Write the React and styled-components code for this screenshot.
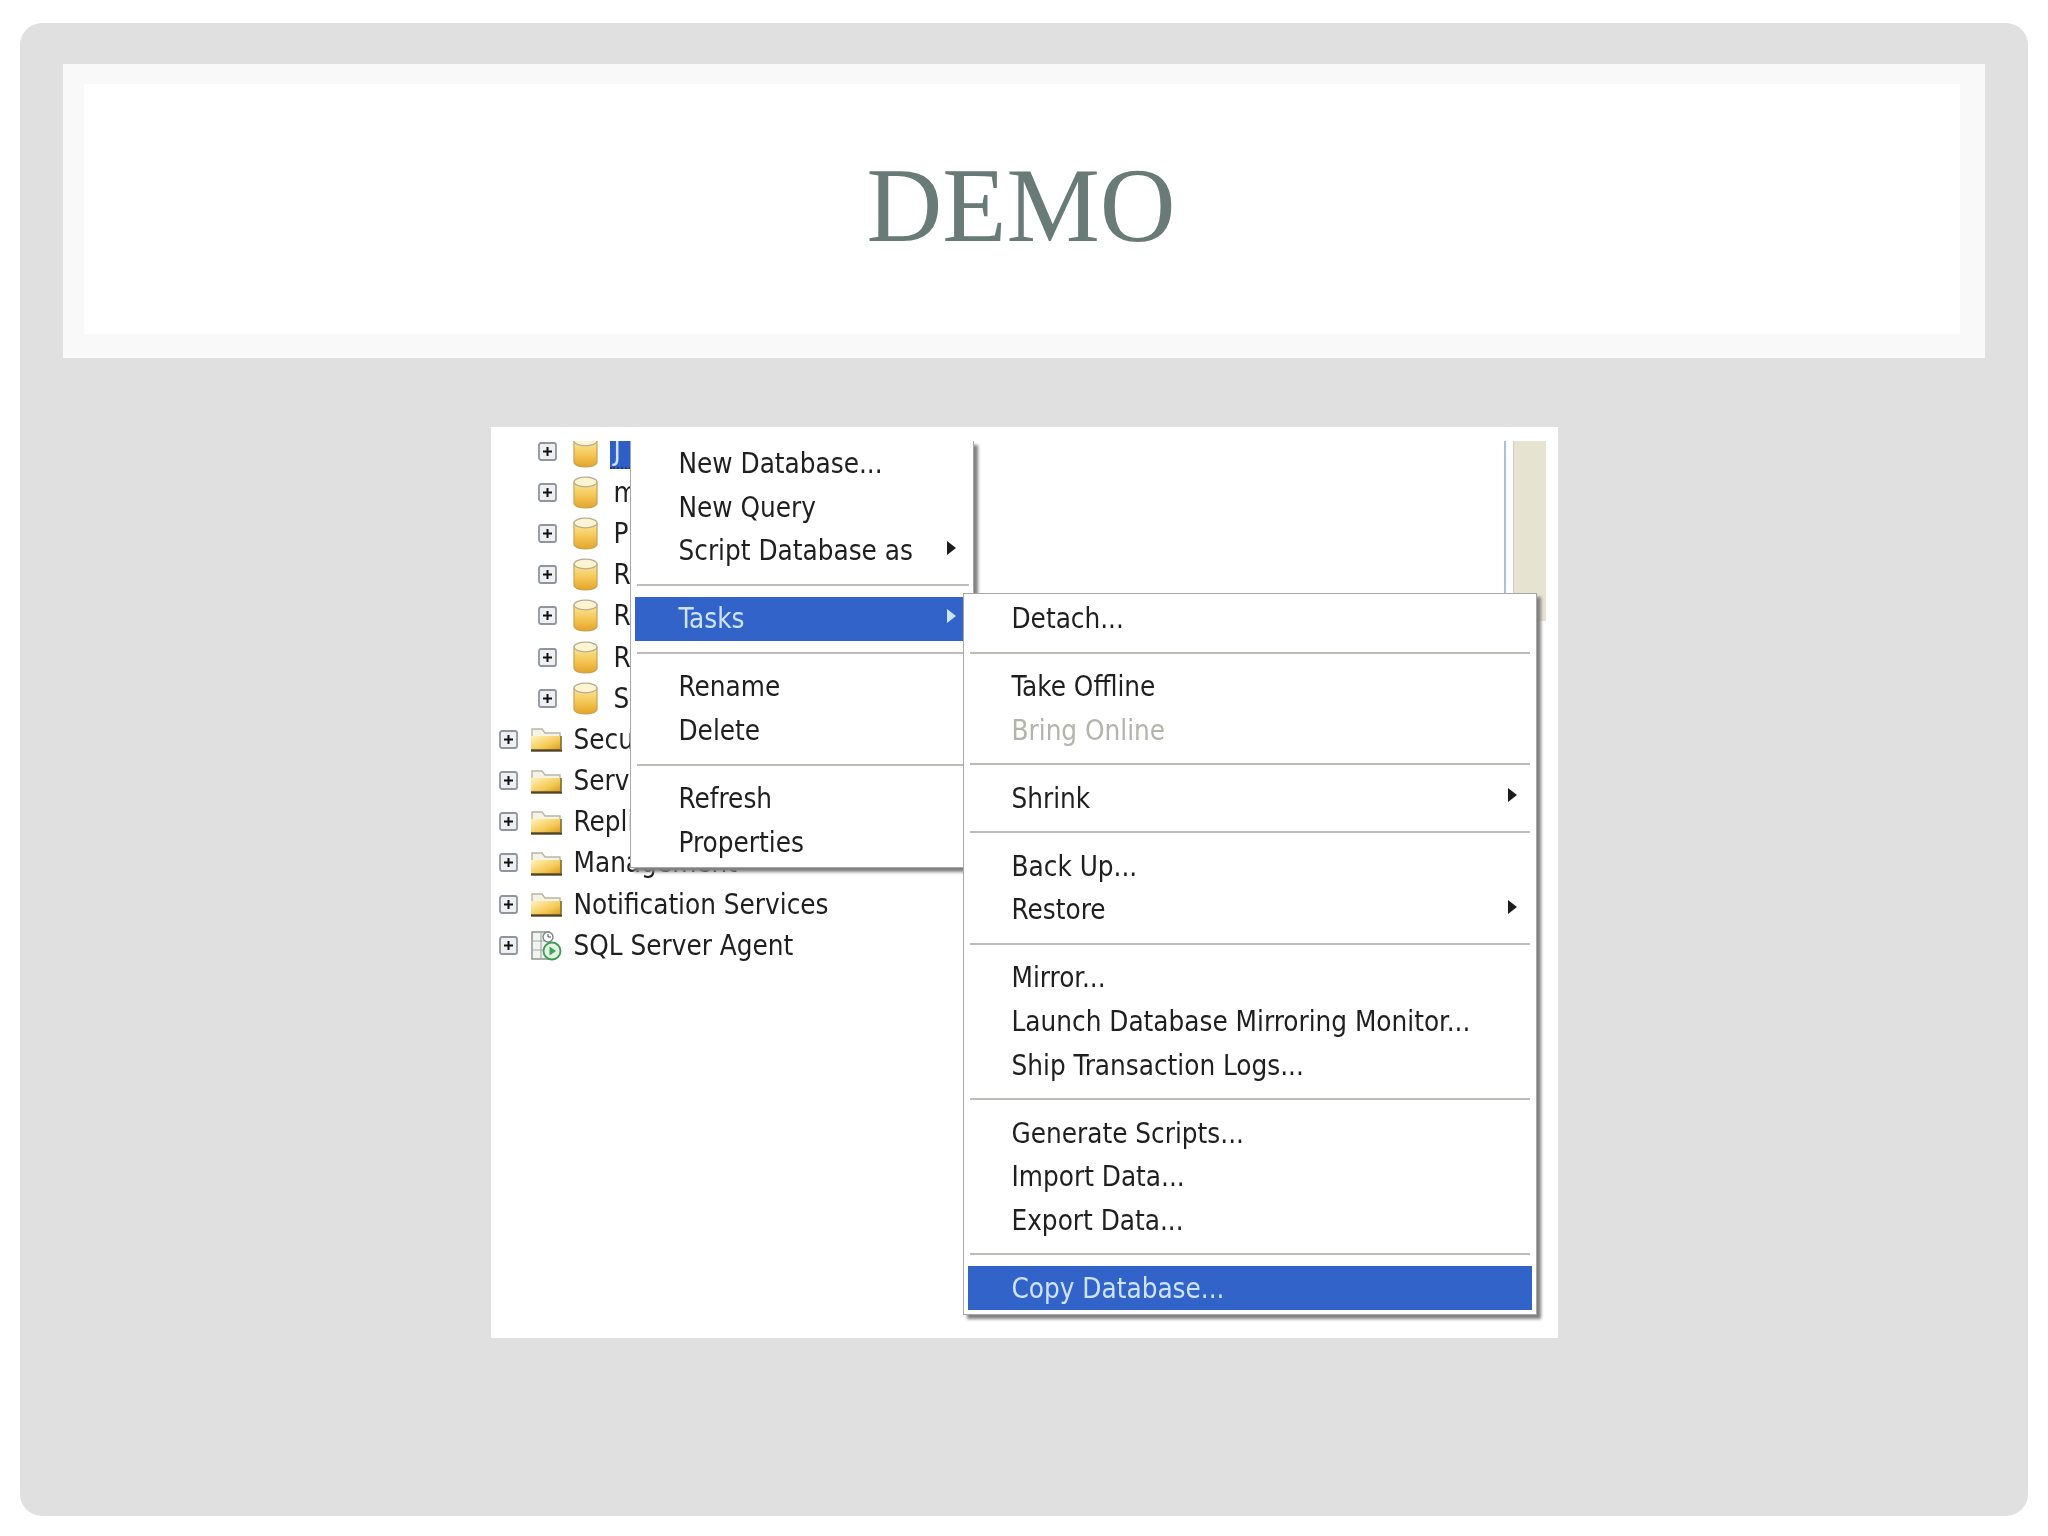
import React from 'react';
import styled, {createGlobalStyle} from 'styled-components';

const GlobalStyle = createGlobalStyle`
  html, body {
    margin: 0;
    padding: 0;
    background: #fff;
  }
`;

const Slide = styled.div`
  box-sizing: border-box;
  width: 2008px;
  height: 1493px;
  margin: 23px 20px 20px;
  padding: 41px 43px 0;
  display: flex;
  flex-direction: column;
  background: #e0e0e1;
  border-radius: 22px;
`;

const TitleBand = styled.div`
  box-sizing: border-box;
  height: 294px;
  padding: 20px 25px 24px 21px;
  background: #f9f9f9;
`;

const TitleBox = styled.div`
  height: 100%;
  display: flex;
  justify-content: center;
  align-items: center;
  background: #fff;
`;

const Title = styled.h1`
  margin: -8px 2px 0 0;
  font-family: "Liberation Serif", serif;
  font-size: 105px;
  font-weight: 400;
  line-height: 1;
  color: #687b77;
`;

const Shot = styled.div`
  position: relative;
  align-self: center;
  width: 1067px;
  height: 911px;
  margin-top: 69px;
  display: flex;
  align-items: flex-start;
  background: #fff;
  font-family: "DejaVu Sans", "Liberation Sans", sans-serif;
  font-stretch: condensed;
  font-size: 27.6px;
  color: #1f1f1f;
  overflow: hidden;
  filter: blur(0.75px);
`;

const Tree = styled.div`
  flex: 1;
  height: 560px;
  margin-top: 14px;
  overflow: hidden;
`;

const TreeList = styled.ul`
  list-style: none;
  margin: -10.5px 0 0;
  padding: 0;
`;

const TreeRow = styled.li`
  height: 41.2px;
  display: flex;
  align-items: center;
  padding-left: ${p => p.$level === 0 ? 47 : 8}px;
  white-space: nowrap;
`;

const Slot = styled.span`
  width: ${p => p.$wide ? 56 : 57}px;
  display: flex;
  justify-content: center;
`;

const TreeLabel = styled.span`
  margin-left: ${p => p.$selected ? -4 : 0}px;
  padding: ${p => p.$selected ? '0 10px 0 4px' : 0};
  ${p => p.$selected && `
    background: #2f5fc6;
    color: #cfe2ff;
    border-bottom: 2px dotted #23387a;
  `}
`;

const Edge = styled.div`
  width: 33px;
  height: 180px;
  margin: 14px 12px 0 0;
  padding-left: 7px;
  border-left: 2px solid #a9c0dc;
  &::after {
    content: "";
    display: block;
    height: 100%;
    background: #e6e3d0;
    border-left: 1px solid #cfcfcf;
  }
`;

const Menu = styled.div`
  position: absolute;
  box-sizing: border-box;
  background: #fff;
  box-shadow: 4px 4px 3px #808080;
  border: 1px solid #a8a8a8;
`;

const MainMenu = styled(Menu)`
  left: 139px;
  top: 14px;
  width: 344px;
  height: 427px;
  padding: 1px 2px 4px 4px;
  border-top: none;
`;

const SubMenu = styled(Menu)`
  left: 472px;
  top: 166px;
  width: 574px;
  height: 722px;
  padding: 3px 4px 4px;
`;

const Item = styled.div`
  box-sizing: border-box;
  height: 43.6px;
  display: flex;
  align-items: center;
  padding: 0 15px 0 44px;
  white-space: nowrap;
  ${p => p.$active && `
    background: #3163c8;
    color: #cde3ff;
  `}
  ${p => p.$muted && 'color: #b4b4ac;'}
`;

const Arrow = styled.span`
  width: 0;
  height: 0;
  margin: -6px 0 0 auto;
  border-style: solid;
  border-width: 7px 0 7px 9px;
  border-color: transparent transparent transparent ${p => p.$active ? '#cde3ff' : '#1c1c1c'};
`;

const Sep = styled.div`
  height: 24.4px;
  display: flex;
  align-items: center;
  padding: 0 2px;
  &::after {
    content: "";
    flex: 1;
    height: 2px;
    background: #bdbdb8;
  }
`;

const Gradients = () => (
    <svg width="0" height="0" style={{position: 'absolute'}}>
        <defs>
            <linearGradient id="dbBody" x1="0" y1="0" x2="0" y2="1">
                <stop offset="0" stopColor="#fbe79c"/>
                <stop offset="0.55" stopColor="#f4c552"/>
                <stop offset="1" stopColor="#e3a42a"/>
            </linearGradient>
            <linearGradient id="folderBody" x1="0" y1="0" x2="1" y2="1">
                <stop offset="0" stopColor="#fff3bf"/>
                <stop offset="0.6" stopColor="#f5c955"/>
                <stop offset="1" stopColor="#d8981e"/>
            </linearGradient>
        </defs>
    </svg>
);

const PlusBox = () => (
    <svg width="19" height="19" viewBox="0 0 19 19">
        <rect x="1" y="1" width="17" height="17" rx="2" fill="#eef0f4" stroke="#8f959e" strokeWidth="1.800"/>
        <path d="M5 9.500h9M9.500 5v9" stroke="#111" strokeWidth="2"/>
    </svg>
);

const DbIcon = () => (
    <svg width="25" height="33" viewBox="0 0 25 33">
        <path d="M1 6v21c0 3 5 5 11.500 5s11.500-2 11.500-5V6z" fill="url(#dbBody)" stroke="#c9a354" strokeWidth="1.200"/>
        <ellipse cx="12.500" cy="6" rx="11.500" ry="4.800" fill="#fdf4d2" stroke="#b9ad90" strokeWidth="1.200"/>
    </svg>
);

const FolderIcon = () => (
    <svg width="32" height="26" viewBox="0 0 32 26">
        <path d="M2 24V3h10l3 4h15v17z" fill="#f7f3e4" stroke="#b9b5a6" strokeWidth="1.400"/>
        <path d="M1 24V10h30v14z" fill="url(#folderBody)"/>
        <path d="M1 24.500h31" stroke="#4f4426" strokeWidth="2.400"/>
        <path d="M31 10v14" stroke="#7c6a30" strokeWidth="1.600"/>
    </svg>
);

const AgentIcon = () => (
    <svg width="32" height="31" viewBox="0 0 32 31">
        <path d="M2 2h17v27H2z" fill="#f2f4f2" stroke="#8c958e" strokeWidth="1.500"/>
        <path d="M2 11h17M2 20h17M11 2v27" stroke="#a4aca6" strokeWidth="1.200"/>
        <circle cx="18" cy="7" r="5" fill="#fff" stroke="#7d8580" strokeWidth="1.400"/>
        <path d="M18 4v3h3" stroke="#4c4c4c" strokeWidth="1" fill="none"/>
        <circle cx="22" cy="21" r="8.500" fill="#e3f4e0" stroke="#3f9a57" strokeWidth="1.800"/>
        <path d="M19.500 16.500l6.500 4.500-6.500 4.500z" fill="#3ea35a"/>
    </svg>
);

const databases = ['J', 'm', 'P', 'R', 'R', 'R', 'S'];
const folders = ['Security', 'Server Objects', 'Replication', 'Management', 'Notification Services'];

const mainMenu = [
    ['New Database...', 'New Query', {text: 'Script Database as', arrow: true}],
    [{text: 'Tasks', arrow: true, active: true}],
    ['Rename', 'Delete'],
    ['Refresh', 'Properties'],
];

const subMenu = [
    ['Detach...'],
    ['Take Offline', {text: 'Bring Online', muted: true}],
    [{text: 'Shrink', arrow: true}],
    ['Back Up...', {text: 'Restore', arrow: true}],
    ['Mirror...', 'Launch Database Mirroring Monitor...', 'Ship Transaction Logs...'],
    ['Generate Scripts...', 'Import Data...', 'Export Data...'],
    [{text: 'Copy Database...', active: true}],
];

const MenuGroups = ({groups}) => groups.map((group, i) => (
    <React.Fragment key={i}>
        {i > 0 && <Sep/>}
        {group.map(entry => {
            const item = typeof entry === 'string' ? {text: entry} : entry;
            return (
                <Item key={item.text} $active={item.active} $muted={item.muted}>
                    {item.text}
                    {item.arrow && <Arrow $active={item.active}/>}
                </Item>
            );
        })}
    </React.Fragment>
));

export default function App() {
    return (
        <>
            <GlobalStyle/>
            <Gradients/>
            <Slide>
                <TitleBand>
                    <TitleBox>
                        <Title>DEMO</Title>
                    </TitleBox>
                </TitleBand>
                <Shot>
                    <Tree>
                        <TreeList>
                            {databases.map((name, i) => (
                                <TreeRow key={i} $level={0}>
                                    <PlusBox/>
                                    <Slot><DbIcon/></Slot>
                                    <TreeLabel $selected={i === 0}>{name}</TreeLabel>
                                </TreeRow>
                            ))}
                            {folders.map(name => (
                                <TreeRow key={name} $level={1}>
                                    <PlusBox/>
                                    <Slot $wide><FolderIcon/></Slot>
                                    <TreeLabel>{name}</TreeLabel>
                                </TreeRow>
                            ))}
                            <TreeRow $level={1}>
                                <PlusBox/>
                                <Slot $wide><AgentIcon/></Slot>
                                <TreeLabel>SQL Server Agent</TreeLabel>
                            </TreeRow>
                        </TreeList>
                    </Tree>
                    <Edge/>
                    <MainMenu>
                        <MenuGroups groups={mainMenu}/>
                    </MainMenu>
                    <SubMenu>
                        <MenuGroups groups={subMenu}/>
                    </SubMenu>
                </Shot>
            </Slide>
        </>
    );
}
